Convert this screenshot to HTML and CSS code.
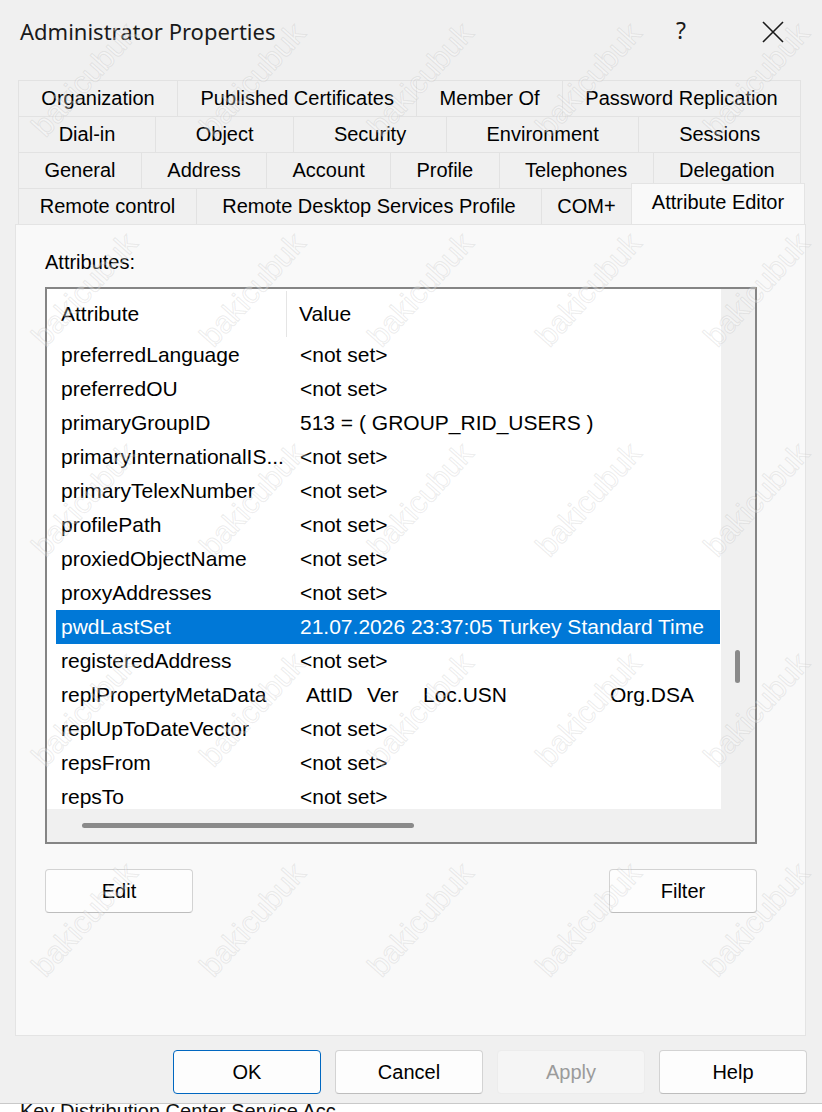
FILE: index.html
```html
<!DOCTYPE html>
<html lang="en">
<head>
    <meta charset="UTF-8">
    <meta name="viewport" content="width=device-width, initial-scale=1.0">
    <title>Administrator Properties</title>
    <link rel="stylesheet" href="styles.css">
</head>
<body>
    <div class="dialog">
        <div class="titlebar">
            <span class="title">Administrator Properties</span>
            <span class="help-mark">?</span>
            <span class="close-btn">
                <svg width="22" height="22" viewBox="0 0 22 22"><path d="M1 1 L21 21 M21 1 L1 21" stroke="#1a1a1a" stroke-width="1.6" fill="none"/></svg>
            </span>
        </div>

        <div class="tabs">
            <div class="tab-row">
                <div class="tab">Organization</div>
                <div class="tab">Published Certificates</div>
                <div class="tab">Member Of</div>
                <div class="tab">Password Replication</div>
            </div>
            <div class="tab-row">
                <div class="tab">Dial-in</div>
                <div class="tab">Object</div>
                <div class="tab">Security</div>
                <div class="tab">Environment</div>
                <div class="tab">Sessions</div>
            </div>
            <div class="tab-row">
                <div class="tab">General</div>
                <div class="tab">Address</div>
                <div class="tab">Account</div>
                <div class="tab">Profile</div>
                <div class="tab">Telephones</div>
                <div class="tab">Delegation</div>
            </div>
            <div class="tab-row front">
                <div class="tab t-remote">Remote control</div>
                <div class="tab t-rdsp">Remote Desktop Services Profile</div>
                <div class="tab t-com">COM+</div>
                <div class="tab selected">Attribute Editor</div>
            </div>
        </div>

        <div class="sheet">
            <div class="field-label">Attributes:</div>
            <div class="listbox">
                <div class="list-content">
                    <div class="list-header">
                        <div class="col-attr">Attribute</div>
                        <div class="col-value">Value</div>
                    </div>
                    <div class="row"><div class="c1">preferredLanguage</div><div class="c2">&lt;not set&gt;</div></div>
                    <div class="row"><div class="c1">preferredOU</div><div class="c2">&lt;not set&gt;</div></div>
                    <div class="row"><div class="c1">primaryGroupID</div><div class="c2">513 = ( GROUP_RID_USERS )</div></div>
                    <div class="row"><div class="c1">primaryInternationalIS...</div><div class="c2">&lt;not set&gt;</div></div>
                    <div class="row"><div class="c1">primaryTelexNumber</div><div class="c2">&lt;not set&gt;</div></div>
                    <div class="row"><div class="c1">profilePath</div><div class="c2">&lt;not set&gt;</div></div>
                    <div class="row"><div class="c1">proxiedObjectName</div><div class="c2">&lt;not set&gt;</div></div>
                    <div class="row"><div class="c1">proxyAddresses</div><div class="c2">&lt;not set&gt;</div></div>
                    <div class="row active"><div class="c1">pwdLastSet</div><div class="c2">21.07.2026 23:37:05 Turkey Standard Time</div></div>
                    <div class="row"><div class="c1">registeredAddress</div><div class="c2">&lt;not set&gt;</div></div>
                    <div class="row"><div class="c1">replPropertyMetaData</div><div class="c2 meta"><span class="m-att">AttID</span><span class="m-ver">Ver</span><span class="m-usn">Loc.USN</span><span>Org.DSA</span></div></div>
                    <div class="row"><div class="c1">replUpToDateVector</div><div class="c2">&lt;not set&gt;</div></div>
                    <div class="row"><div class="c1">repsFrom</div><div class="c2">&lt;not set&gt;</div></div>
                    <div class="row"><div class="c1">repsTo</div><div class="c2">&lt;not set&gt;</div></div>
                </div>
                <div class="vscroll"><div class="vthumb"></div></div>
                <div class="hscroll"><div class="hthumb"></div></div>
                <div class="corner"></div>
            </div>
            <div class="list-actions">
                <button class="btn">Edit</button>
                <button class="btn">Filter</button>
            </div>
        </div>

        <div class="footer">
            <button class="btn default">OK</button>
            <button class="btn">Cancel</button>
            <button class="btn disabled">Apply</button>
            <button class="btn">Help</button>
        </div>
    </div>
    <div class="behind">Key Distribution Center Service Acc</div>

    <div class="watermarks">
        <div class="wm-grid">
            <span>bakicubuk</span><span>bakicubuk</span><span>bakicubuk</span><span>bakicubuk</span><span>bakicubuk</span>
            <span>bakicubuk</span><span>bakicubuk</span><span>bakicubuk</span><span>bakicubuk</span><span>bakicubuk</span>
            <span>bakicubuk</span><span>bakicubuk</span><span>bakicubuk</span><span>bakicubuk</span><span>bakicubuk</span>
            <span>bakicubuk</span><span>bakicubuk</span><span>bakicubuk</span><span>bakicubuk</span><span>bakicubuk</span>
            <span>bakicubuk</span><span>bakicubuk</span><span>bakicubuk</span><span>bakicubuk</span><span>bakicubuk</span>
        </div>
    </div>
</body>
</html>
```

FILE: styles.css
```css
html, body {
    margin: 0;
    padding: 0;
}

body {
    width: 822px;
    height: 1112px;
    overflow: hidden;
    position: relative;
    font-family: "Liberation Sans", Arial, sans-serif;
    font-size: 20px;
    color: #000;
    background: #ffffff;
}

.dialog {
    height: 1104px;
    background: #f0f0f0;
    border-bottom: 1px solid #c9c9c9;
    box-sizing: border-box;
}

/* title bar */
.titlebar {
    height: 80px;
    display: flex;
    align-items: flex-start;
    padding: 0 38px 0 20px;
}

.title {
    font-family: "Noto Sans", "Open Sans", sans-serif;
    font-size: 22px;
    margin-top: 16px;
    color: #1a1a1a;
    flex: 1;
}

.help-mark {
    font-family: "Noto Sans", sans-serif;
    font-size: 23px;
    margin-top: 14px;
    margin-right: 76px;
    color: #1a1a1a;
}

.close-btn {
    margin-top: 21px;
    display: flex;
}

/* tabs */
.tabs {
    margin: 0 21px 0 18px;
}

.tab-row {
    display: flex;
    height: 36px;
}

.tab {
    flex: 1 1 auto;
    padding: 0 18px;
    display: flex;
    align-items: center;
    justify-content: center;
    white-space: nowrap;
    background: #f0f0f0;
    border-top: 1px solid #e2e2e2;
    border-left: 1px solid #e2e2e2;
    box-sizing: border-box;
}

.tab:last-child {
    border-right: 1px solid #e2e2e2;
}

.front .tab {
    flex: none;
    padding: 0;
}

.t-remote { width: 178px; }
.t-rdsp { width: 345px; }
.t-com { width: 90px; }

.front .tab.selected {
    width: 174px;
    height: 41px;
    margin-top: -5px;
    margin-right: -4px;
    background: #f9f9f9;
    border-color: #e4e4e4;
    align-items: flex-start;
    padding-top: 7px;
    position: relative;
    z-index: 1;
}

/* property page */
.sheet {
    margin: 0 16px 0 15px;
    height: 812px;
    background: #f9f9f9;
    border: 1px solid #e4e4e4;
    box-sizing: border-box;
    padding: 26px 0 0 29px;
}

.field-label {
    height: 36px;
}

.listbox {
    width: 712px;
    height: 557px;
    border: 2px solid #858585;
    box-sizing: border-box;
    background: #fff;
    display: grid;
    grid-template-columns: 674px 34px;
    grid-template-rows: 520px 33px;
}

.list-content {
    overflow: hidden;
    font-size: 21px;
}

.list-header {
    display: flex;
    height: 49px;
    align-items: center;
    padding-left: 9px;
}

.col-attr {
    width: 231px;
    padding-left: 5px;
    box-sizing: border-box;
    border-right: 1px solid #e5e5e5;
    height: 46px;
    display: flex;
    align-items: center;
}

.col-value {
    padding-left: 12px;
}

.row {
    display: flex;
    height: 34px;
    align-items: center;
    margin-left: 9px;
    white-space: nowrap;
}

.row .c1 {
    width: 239px;
    padding-left: 5px;
    box-sizing: border-box;
    overflow: hidden;
}

.row .c2 {
    padding-left: 5px;
}

.row.active {
    background: #0078d7;
    color: #fff;
    margin-right: 1px;
}

.meta {
    display: flex;
}

.meta .m-att { margin-left: 6px; width: 61px; }
.meta .m-ver { width: 56px; }
.meta .m-usn { width: 187px; }

.vscroll {
    background: #f0f0f0;
    padding: 361px 0 0 14px;
    box-sizing: border-box;
}

.vthumb {
    width: 5px;
    height: 33px;
    border-radius: 3px;
    background: #8a8a8a;
}

.hscroll {
    background: #f0f0f0;
    padding: 14px 0 0 35px;
    box-sizing: border-box;
}

.hthumb {
    width: 332px;
    height: 5px;
    border-radius: 3px;
    background: #8a8a8a;
}

.corner {
    background: #f0f0f0;
}

.list-actions {
    display: flex;
    justify-content: space-between;
    width: 712px;
    margin-top: 25px;
}

/* buttons */
.btn {
    width: 148px;
    height: 44px;
    font-family: "Liberation Sans", Arial, sans-serif;
    font-size: 20px;
    color: #000;
    background: #fdfdfd;
    border: 1px solid #d3d3d3;
    border-bottom-color: #bdbdbd;
    border-radius: 4px;
    padding: 0;
}

.btn.default {
    border: 1px solid #0067c0;
}

.btn.disabled {
    background: #f5f5f5;
    border-color: #ececec;
    color: #9b9b9b;
}

.footer {
    display: flex;
    justify-content: flex-end;
    gap: 14px;
    padding: 14px 15px 0 0;
}

/* window behind the dialog */
.behind {
    height: 8px;
    overflow: hidden;
    padding-left: 20px;
    font-size: 20px;
    line-height: 14px;
    color: #111;
}

/* watermark overlay */
.watermarks {
    position: absolute;
    left: 0;
    top: 0;
    width: 822px;
    height: 1112px;
    overflow: hidden;
    pointer-events: none;
}

.wm-grid {
    display: grid;
    grid-template-columns: repeat(5, 168px);
    grid-auto-rows: 210px;
    justify-items: center;
    align-items: center;
    margin-top: -25px;
    margin-left: 1px;
}

.wm-grid span {
    font-family: "Liberation Sans", Arial, sans-serif;
    font-size: 31px;
    color: rgba(255, 255, 255, 0.3);
    -webkit-text-stroke: 1px rgba(150, 150, 150, 0.18);
    transform: rotate(-48deg);
}
```
